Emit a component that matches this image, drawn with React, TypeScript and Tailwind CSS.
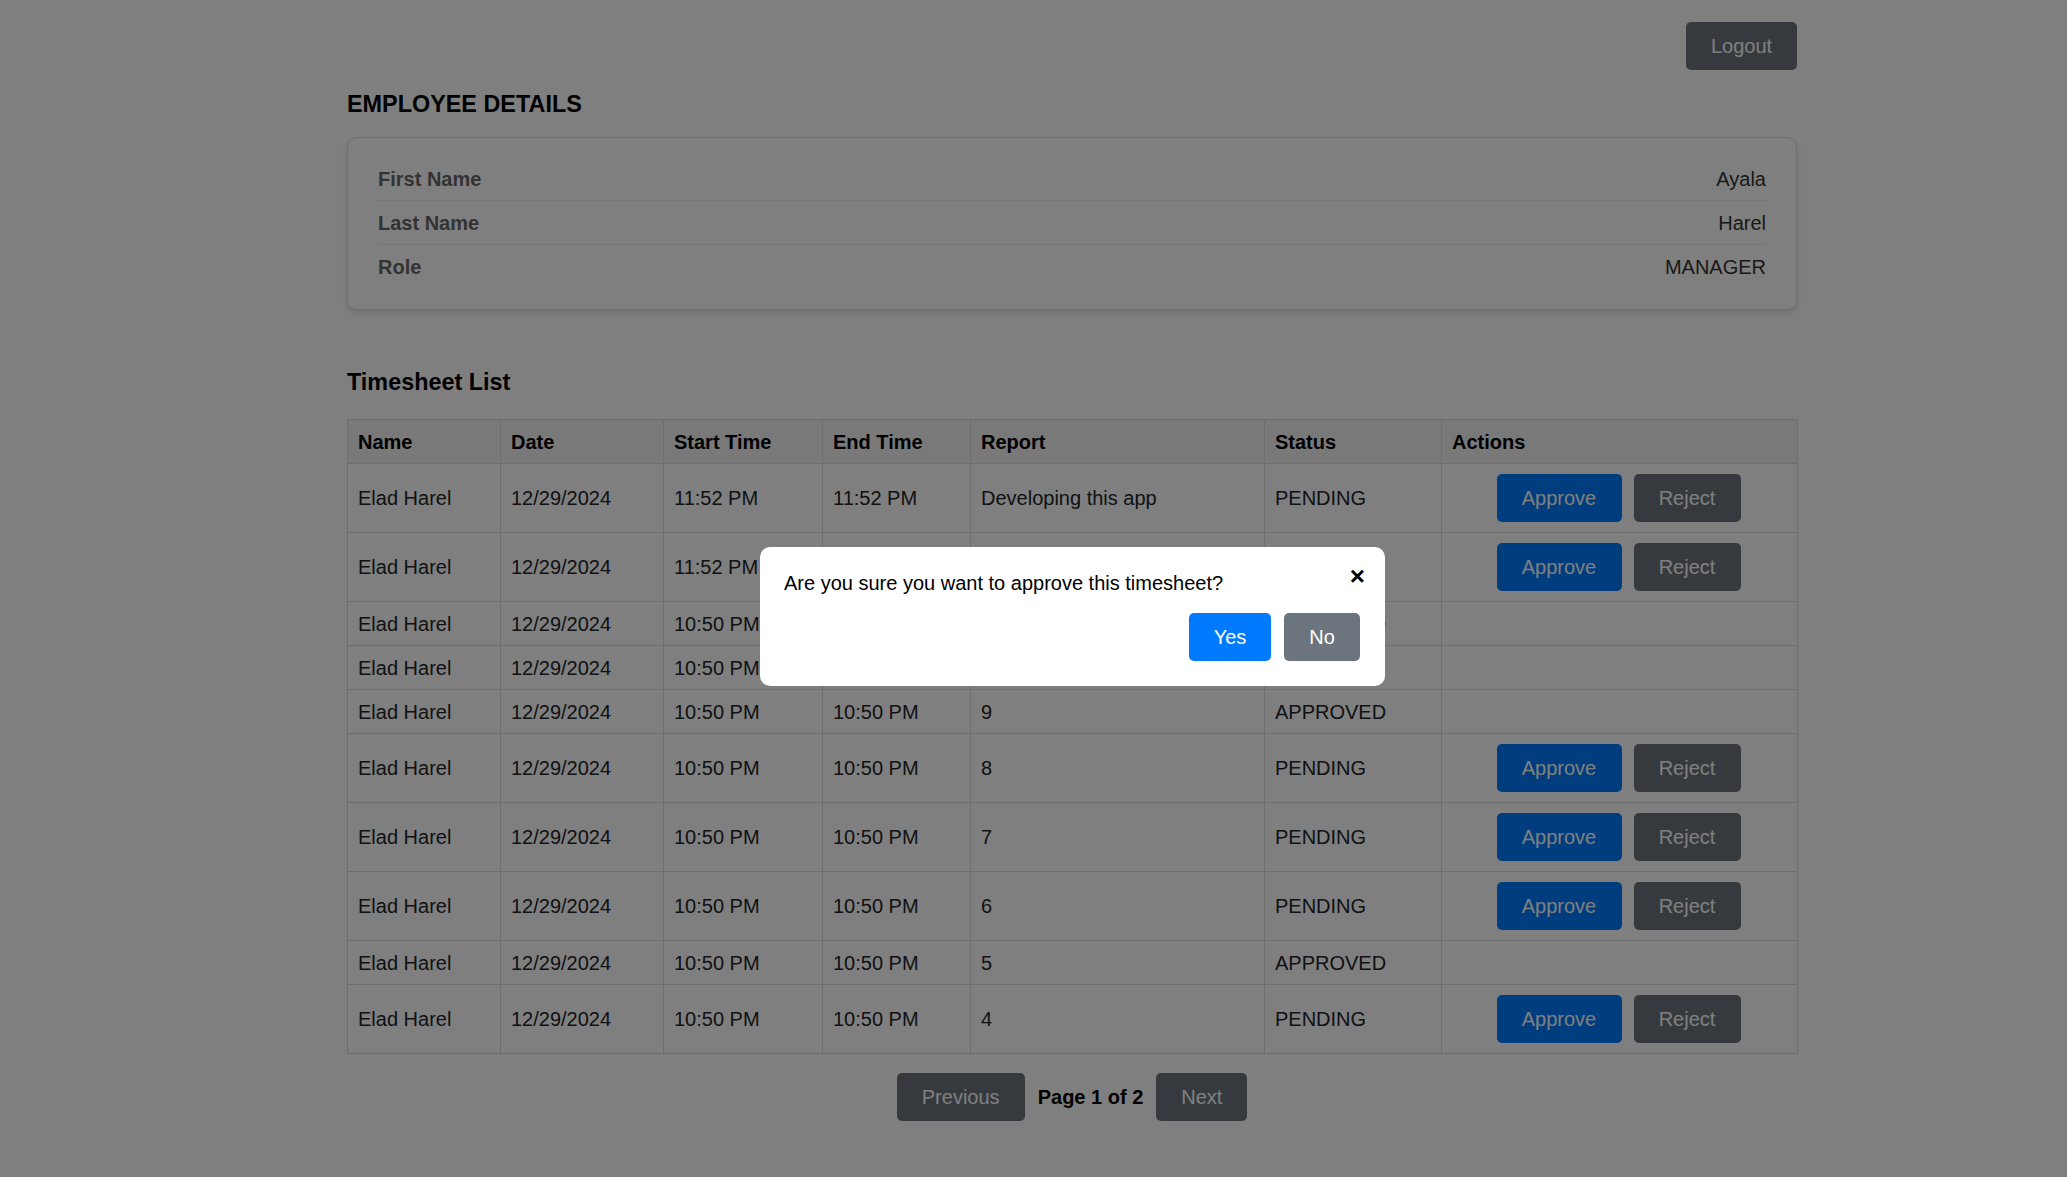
import type { ReactNode } from "react";

type Row = {
  name: string;
  date: string;
  start: string;
  end: string;
  report: string;
  status: "PENDING" | "APPROVED" | "REJECTED";
};

const ROWS: Row[] = [
  { name: "Elad Harel", date: "12/29/2024", start: "11:52 PM", end: "11:52 PM", report: "Developing this app", status: "PENDING" },
  { name: "Elad Harel", date: "12/29/2024", start: "11:52 PM", end: "11:52 PM", report: "Developing this app", status: "PENDING" },
  { name: "Elad Harel", date: "12/29/2024", start: "10:50 PM", end: "10:50 PM", report: "11", status: "APPROVED" },
  { name: "Elad Harel", date: "12/29/2024", start: "10:50 PM", end: "10:50 PM", report: "10", status: "REJECTED" },
  { name: "Elad Harel", date: "12/29/2024", start: "10:50 PM", end: "10:50 PM", report: "9", status: "APPROVED" },
  { name: "Elad Harel", date: "12/29/2024", start: "10:50 PM", end: "10:50 PM", report: "8", status: "PENDING" },
  { name: "Elad Harel", date: "12/29/2024", start: "10:50 PM", end: "10:50 PM", report: "7", status: "PENDING" },
  { name: "Elad Harel", date: "12/29/2024", start: "10:50 PM", end: "10:50 PM", report: "6", status: "PENDING" },
  { name: "Elad Harel", date: "12/29/2024", start: "10:50 PM", end: "10:50 PM", report: "5", status: "APPROVED" },
  { name: "Elad Harel", date: "12/29/2024", start: "10:50 PM", end: "10:50 PM", report: "4", status: "PENDING" },
];

const DETAILS = [
  { label: "First Name", value: "Ayala" },
  { label: "Last Name", value: "Harel" },
  { label: "Role", value: "MANAGER" },
];

function Btn({
  children,
  className = "",
}: {
  children: ReactNode;
  className?: string;
}) {
  return (
    <button
      className={`h-[48px] rounded-[5px] text-white text-[20px] leading-[30px] ${className}`}
    >
      {children}
    </button>
  );
}

function Th({ children }: { children: ReactNode }) {
  return (
    <th className="border border-[#dddddd] px-[10px] py-0 text-left font-bold align-middle">
      {children}
    </th>
  );
}

function Td({ children }: { children?: ReactNode }) {
  return (
    <td className="border border-[#dddddd] px-[10px] py-0 align-middle">{children}</td>
  );
}

export default function App() {
  return (
    <div className="relative min-h-screen bg-white font-['Liberation_Sans',Arial,sans-serif] text-[20px] leading-[30px] text-[#212529]">
      <div className="ml-[347px] w-[1450px] pt-[22px]">
        <div className="flex justify-end">
          <Btn className="w-[111px] bg-[#6c757d]">Logout</Btn>
        </div>

        <h2 className="mt-[20px] text-[23.4px] font-bold leading-[28px] text-black">
          EMPLOYEE DETAILS
        </h2>

        <div className="mt-[19px] rounded-[10px] border border-[#dddddd] px-[30px] pt-[19px] pb-[21px] shadow-[0_3px_6px_rgba(0,0,0,0.12)]">
          {DETAILS.map((d, i) => (
            <div
              key={d.label}
              className={`flex items-center justify-between ${
                i < DETAILS.length - 1 ? "h-[44px] border-b border-[#eeeeee]" : "h-[43px]"
              }`}
            >
              <span className="font-bold text-[#666666]">{d.label}</span>
              <span className="text-[#333333]">{d.value}</span>
            </div>
          ))}
        </div>

        <h2 className="mt-[58px] text-[23.4px] font-bold leading-[28px] text-black">
          Timesheet List
        </h2>

        <table className="mt-[23px] w-[1450px] table-fixed border-collapse border border-[#dddddd]">
          <colgroup>
            <col className="w-[153px]" />
            <col className="w-[163px]" />
            <col className="w-[159px]" />
            <col className="w-[148px]" />
            <col className="w-[294px]" />
            <col className="w-[177px]" />
            <col className="w-[356px]" />
          </colgroup>
          <thead>
            <tr className="h-[44px] bg-[#f2f2f2] text-black">
              <Th>Name</Th>
              <Th>Date</Th>
              <Th>Start Time</Th>
              <Th>End Time</Th>
              <Th>Report</Th>
              <Th>Status</Th>
              <Th>Actions</Th>
            </tr>
          </thead>
          <tbody>
            {ROWS.map((r, i) => {
              const pending = r.status === "PENDING";
              return (
                <tr key={i} className={pending ? "h-[69px]" : "h-[44px]"}>
                  <Td>{r.name}</Td>
                  <Td>{r.date}</Td>
                  <Td>{r.start}</Td>
                  <Td>{r.end}</Td>
                  <Td>{r.report}</Td>
                  <Td>{r.status}</Td>
                  <Td>
                    {pending && (
                      <div className="flex justify-center gap-[12px] pr-[2px]">
                        <Btn className="w-[125px] bg-[#007bff]">Approve</Btn>
                        <Btn className="w-[107px] bg-[#6c757d]">Reject</Btn>
                      </div>
                    )}
                  </Td>
                </tr>
              );
            })}
          </tbody>
        </table>

        <div className="mt-[19px] flex items-center justify-center gap-[13px]">
          <Btn className="w-[128px] bg-[#6c757d]">Previous</Btn>
          <span className="font-bold text-black">Page 1 of 2</span>
          <Btn className="w-[91px] bg-[#6c757d]">Next</Btn>
        </div>
      </div>

      {/* confirm dialog */}
      <div className="fixed inset-0 bg-black/50">
        <div className="absolute left-[760px] top-[547px] w-[625px] rounded-[10px] bg-white px-[24px] pt-[21px] pb-[25px] text-black">
          <button className="absolute right-[20px] top-[14px] text-[26px] font-bold leading-[30px]">
            ×
          </button>
          <p className="text-[20px] leading-[30px]">Are you sure you want to approve this timesheet?</p>
          <div className="mt-[15px] flex justify-end gap-[13px] pr-px">
            <Btn className="w-[82px] bg-[#007bff]">Yes</Btn>
            <Btn className="w-[76px] bg-[#6c757d]">No</Btn>
          </div>
        </div>
      </div>
    </div>
  );
}
